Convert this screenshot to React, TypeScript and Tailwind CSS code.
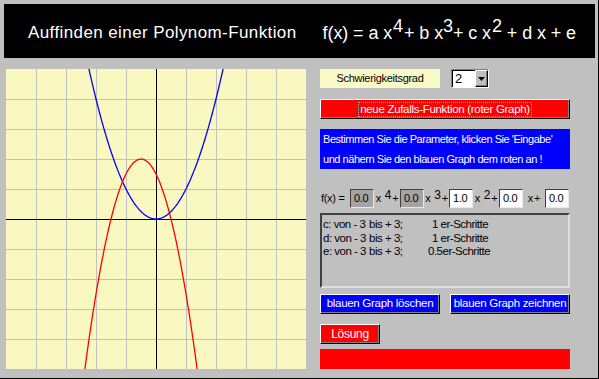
import React from 'react';

const FONT = { fontFamily: '"Liberation Sans", Arial, sans-serif' };

// graph: 300x300 canvas, 30px per unit, origin at centre
const toPoints = (f: (x: number) => number) => {
  const pts: string[] = [];
  for (let px = 0; px <= 300; px += 1) {
    const x = (px - 150) / 30;
    const py = 150 - f(x) * 30;
    if (py < -40 || py > 340) continue;
    pts.push(`${px},${py.toFixed(2)}`);
  }
  return pts.join(' ');
};

const Plot: React.FC = () => {
  const grid = [30, 60, 90, 120, 180, 210, 240, 270];
  return (
    <svg width={300} height={300} className="block bg-[#f9f8c0] shrink-0">
      {grid.map(g => (
        <g key={g}>
          <line x1={g + 0.5} y1={0} x2={g + 0.5} y2={300} stroke="#c0c0c0" strokeWidth={1} />
          <line x1={0} y1={g + 0.5} x2={300} y2={g + 0.5} stroke="#c0c0c0" strokeWidth={1} />
        </g>
      ))}
      <line x1={150.5} y1={0} x2={150.5} y2={300} stroke="#000" strokeWidth={1} />
      <line x1={0} y1={150.5} x2={300} y2={150.5} stroke="#000" strokeWidth={1} />
      <polyline points={toPoints(x => x * x)} fill="none" stroke="#0000ff" strokeWidth={1.3} />
      <polyline points={toPoints(x => -2 * x * x - 2 * x + 1.5)} fill="none" stroke="#ff0000" strokeWidth={1.3} />
    </svg>
  );
};

const raised = 'border border-t-white border-l-white border-b-black border-r-black shadow-[inset_-1px_-1px_0_#808080]';

const NumBox: React.FC<{ value: string; gray?: boolean }> = ({ value, gray }) => (
  <div className={`w-[24px] h-[19px] shrink-0 border border-t-[#404040] border-l-[#404040] border-b-[#e8e8e8] border-r-[#e8e8e8] flex items-center pl-[3px] text-[11px] tracking-[-0.3px] text-black ${gray ? 'bg-[#a4a4a4]' : 'bg-white'}`}>
    {value}
  </div>
);

const Term: React.FC<{ exp?: string; w: string }> = ({ exp, w }) => (
  <div className={`${w} shrink-0 flex items-center justify-center gap-[1px] text-[11px] text-black`}>
    <span>x</span>
    {exp && <span className="text-[12px] -translate-y-[4px] ml-[3px]">{exp}</span>}
    <span>+</span>
  </div>
);

const ranges = [
  { v: 'c', step: '1 er-Schritte', off: 'ml-[4px]' },
  { v: 'd', step: '1 er-Schritte', off: 'ml-[4px]' },
  { v: 'e', step: '0.5er-Schritte', off: 'ml-0' },
];

export default function App() {
  return (
    <div style={FONT} className="w-[599px] h-[379px] bg-[#c0c0c0] border-r border-b border-black pt-[4px] pl-[4px] overflow-hidden">
      <div className="w-[591px] h-[54px] bg-black text-white flex items-center">
        <div className="ml-[24px] text-[17px] tracking-[0.4px] mt-[4px]">Auffinden einer Polynom-Funktion</div>
        <div className="ml-[26px] text-[18px] mt-[4px] flex items-baseline whitespace-pre tracking-[-0.1px]">
          <span>f(x) = a x</span>
          <span className="-translate-y-[7px] ml-[1px] mr-[1px]">4</span>
          <span>+ b x</span>
          <span className="-translate-y-[7px]">3</span>
          <span>+ c x</span>
          <span className="-translate-y-[7px] ml-[1px]">2</span>
          <span> + d x + e</span>
        </div>
      </div>

      <div className="flex mt-[11px]">
        <div className="ml-[2px]">
          <Plot />
        </div>

        <div className="ml-[14px] w-[250px] flex flex-col text-[11px] tracking-[-0.3px]">
          <div className="flex items-center h-[19px]">
            <div className="w-[120px] h-[19px] bg-[#fafac8] flex items-center justify-center text-black">Schwierigkeitsgrad</div>
            <div className="ml-[11px] w-[38px] h-[19px] border border-t-[#808080] border-l-[#808080] border-b-white border-r-white flex">
              <div className="flex-1 bg-white border-t border-l border-black flex items-center pl-[2px] text-[13px] text-black">2</div>
              <div className={`w-[13px] bg-[#c0c0c0] flex items-center justify-center ${raised}`}>
                <svg width="7" height="4" viewBox="0 0 7 4"><path d="M0 0h7L3.5 4z" fill="#000" /></svg>
              </div>
            </div>
          </div>

          <div className={`mt-[11px] h-[20px] w-[250px] bg-[#ff0000] text-white flex items-center justify-center ${raised}`}>
            <span className="border border-dotted border-[#a8a8a8] px-[1px] leading-[13px] text-[11.5px]">neue Zufalls-Funktion (roter Graph)</span>
          </div>

          <div className="mt-[10px] h-[40px] bg-[#0000ff] text-white text-[11px] tracking-[-0.45px] pl-[3px] flex flex-col justify-center leading-[20px] whitespace-nowrap">
            <div>Bestimmen Sie die Parameter, klicken Sie 'Eingabe'</div>
            <div>und nähern Sie den blauen Graph dem roten an !</div>
          </div>

          <div className="mt-[20px] flex items-center h-[19px]">
            <div className="w-[30px] shrink-0 pl-[1px] text-black">f(x) =</div>
            <NumBox value="0.0" gray />
            <Term exp="4" w="w-[26px]" />
            <NumBox value="0.0" gray />
            <Term exp="3" w="w-[25px]" />
            <NumBox value="1.0" />
            <Term exp="2" w="w-[26px]" />
            <NumBox value="0.0" />
            <Term w="w-[22px]" />
            <NumBox value="0.0" />
          </div>

          <div className="mt-[5px] h-[75px] border-2 border-t-[#404040] border-l-[#404040] border-b-[#dfdfdf] border-r-[#dfdfdf] pt-[3px] pl-[1px] text-[11.5px] tracking-[-0.5px] leading-[13.5px] text-black">
            {ranges.map(r => (
              <div key={r.v} className="flex whitespace-pre">
                <span className="w-[46px]">{r.v}: von - 3</span>
                <span className="w-[16px]">bis</span>
                <span className="w-[43px]">+ 3;</span>
                <span className={r.off}>{r.step}</span>
              </div>
            ))}
          </div>

          <div className="mt-[6px] flex justify-between">
            <div className={`w-[120px] h-[20px] bg-[#0000ff] text-white text-[11.5px] flex items-center justify-center ${raised}`}>blauen Graph löschen</div>
            <div className={`w-[120px] h-[20px] bg-[#0000ff] text-white text-[11.5px] flex items-center justify-center ${raised}`}>blauen Graph zeichnen</div>
          </div>

          <div className={`mt-[10px] w-[60px] h-[20px] bg-[#ff0000] text-white text-[12px] flex items-center justify-center ${raised}`}>Lösung</div>

          <div className="mt-[5px] h-[20px] bg-[#ff0000]" />
        </div>
      </div>
    </div>
  );
}
